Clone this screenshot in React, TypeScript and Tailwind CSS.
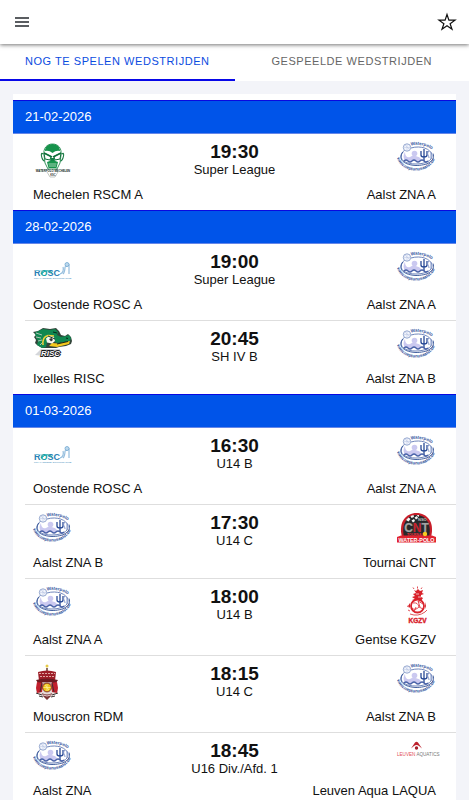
import { useState } from "react";

type Club = "mechelen" | "aalst" | "oostende" | "ixelles" | "tournai" | "gent" | "mouscron" | "leuven";

type Team = { name: string; club: Club };

type Match = {
  time: string;
  league: string;
  home: Team;
  away: Team;
  logoHeight: string;
};

const DAYS: { date: string; matches: Match[] }[] = [
  {
    date: "21-02-2026",
    matches: [
      {
        time: "19:30",
        league: "Super League",
        home: { name: "Mechelen RSCM A", club: "mechelen" },
        away: { name: "Aalst ZNA A", club: "aalst" },
        logoHeight: "h-[39px]",
      },
    ],
  },
  {
    date: "28-02-2026",
    matches: [
      {
        time: "19:00",
        league: "Super League",
        home: { name: "Oostende ROSC A", club: "oostende" },
        away: { name: "Aalst ZNA A", club: "aalst" },
        logoHeight: "h-[39px]",
      },
      {
        time: "20:45",
        league: "SH IV B",
        home: { name: "Ixelles RISC", club: "ixelles" },
        away: { name: "Aalst ZNA B", club: "aalst" },
        logoHeight: "h-9",
      },
    ],
  },
  {
    date: "01-03-2026",
    matches: [
      {
        time: "16:30",
        league: "U14 B",
        home: { name: "Oostende ROSC A", club: "oostende" },
        away: { name: "Aalst ZNA A", club: "aalst" },
        logoHeight: "h-[39px]",
      },
      {
        time: "17:30",
        league: "U14 C",
        home: { name: "Aalst ZNA B", club: "aalst" },
        away: { name: "Tournai CNT", club: "tournai" },
        logoHeight: "h-9",
      },
      {
        time: "18:00",
        league: "U14 B",
        home: { name: "Aalst ZNA A", club: "aalst" },
        away: { name: "Gentse KGZV", club: "gent" },
        logoHeight: "h-[39px]",
      },
      {
        time: "18:15",
        league: "U14 C",
        home: { name: "Mouscron RDM", club: "mouscron" },
        away: { name: "Aalst ZNA B", club: "aalst" },
        logoHeight: "h-[39px]",
      },
      {
        time: "18:45",
        league: "U16 Div./Afd. 1",
        home: { name: "Aalst ZNA", club: "aalst" },
        away: { name: "Leuven Aqua LAQUA", club: "leuven" },
        logoHeight: "h-9",
      },
    ],
  },
];

function AalstLogo({ id }: { id: string }) {
  return (
    <svg className="overflow-visible" width="39" height="32" viewBox="0 0 39 32" fill="none" aria-hidden="true">
      <path id={`${id}-top`} d="M14 5.500Q25 3 36 10" />
      <path id={`${id}-bottom`} d="M0 18C5 35 34 35 39 16" />
      <path d="M14 8C24 5 34 9 35 15c1 6-8 9-16 9C10 24 4 21 4 16c0-2 1-4 4-6" stroke="#7187bc" strokeWidth="1" />
      <path d="M6 12C0 20 8 25 19 25.500c10 0 20-4 17-12" stroke="#2f4f94" strokeWidth="0.900" />
      <circle cx="10" cy="7.500" r="3.700" fill="#f1f4fc" stroke="#8b9fca" strokeWidth="0.900" />
      <path d="M7 7.500h6M10 4v7M8 5l4 4" stroke="#b7c3e0" strokeWidth="0.500" />
      <path d="M8 12c0 4 2 6 5 5 2-1 3-2 5-1 4 1 6 1 6 5H9c-3-2-3-6-1-9z" fill="#cbc9f0" />
      <circle cx="17.500" cy="13.500" r="2.800" fill="#cbc9f0" />
      <path d="M24 11v4q0 2 3 2t3-2v-4M27 9v12" stroke="#294a96" strokeWidth="1.300" />
      <path d="M32 11c-3 3 0 4 0 7m2-6v7" stroke="#8397ca" strokeWidth="1" />
      <path d="M7 21q2-2 4 0t4 0 4 0 4 0 4 0 4 0" stroke="#4a63a8" strokeWidth="1.400" />
      <text fill="#34559b" fontSize="4.500" fontWeight="700">
        <textPath href={`#${id}-top`}>Waterpolo</textPath>
      </text>
      <text fill="#2b4d97" fontSize="4.400" fontWeight="700">
        <textPath href={`#${id}-bottom`}>www.neptunusaalst.be</textPath>
      </text>
    </svg>
  );
}

function MechelenLogo() {
  return (
    <svg width="39" height="39" viewBox="0 0 39 39" fill="none" aria-hidden="true">
      <path d="M10 14c-2-2-2 1-1 4s2 3 3 3M29 14c2-2 2 1 1 4s-2 3-3 3" stroke="#1c7b45" strokeWidth="1.100" />
      <path d="M11 15C10 8 14 4 19.500 4S29 8 28 15l-1 8-3 6h-9l-3-6z" fill="#fff" stroke="#25894f" strokeWidth="0.900" />
      <path d="M12 11c0-4 3-7 7.500-7S27 7 27 11q-4-1-7.500 2-3.500-3-7.500-2z" fill="#16934b" />
      <path d="M11 13l7 3.500-1 3.500-5-1zM28 13l-7 3.500 1 3.500 5-1z" fill="#fff" stroke="#0d6f37" strokeWidth="1" />
      <path d="M11 13l8 4M28 13l-8 4" stroke="#0d6f37" strokeWidth="1.400" />
      <path d="M18 18h3l1 3-2.500 1-2.500-1z" fill="#118044" />
      <path d="M14 22q5.500-3 11 0l-1.500 6h-8z" fill="#16934b" />
      <path d="M15.500 24h8M16 26h7" stroke="#dff0e5" strokeWidth="0.700" />
      <path d="M14 32l3 5h5l3-5" stroke="#9aa39d" strokeWidth="0.600" />
      <text x="20" y="31.500" textAnchor="middle" fontSize="2.800" fontWeight="700" fill="#152b1e">
        WATERPOLO MECHELEN
      </text>
      <text x="20" y="36" textAnchor="middle" fontSize="2.600" fontWeight="700" fill="#333">
        KSC
      </text>
    </svg>
  );
}

function OostendeLogo() {
  return (
    <svg width="39" height="39" viewBox="0 0 39 39" fill="none" aria-hidden="true">
      <path d="M27 24c3-1 4-4 3-7m0 7c2-2 2-4 2-7l4-2v9" stroke="#94bddd" strokeWidth="1.200" />
      <circle cx="34" cy="14.500" r="2" fill="#bed9ed" stroke="#70a7d0" strokeWidth="0.800" />
      <text x="1" y="25.500" fontSize="9" fontWeight="700" fill="#2a7fb4">
        R<tspan fill="#17a3a6">O</tspan>SC
      </text>
      <path d="M8 24q6-6 11-1" stroke="#1aa7a4" strokeWidth="1.200" />
      <path d="M2 20.500h7" stroke="#9fdae6" strokeWidth="0.700" />
      <text x="1" y="29" fontSize="2.300" fill="#3d8dbb">
        ROYAL OSTEND SWIMMING CLUB
      </text>
    </svg>
  );
}

function IxellesLogo() {
  return (
    <svg width="39" height="32" viewBox="0 0 39 32" fill="none" aria-hidden="true">
      <path d="M0 5l5-1 5-3 7 1 6-1 3 3 2 4 4 1 3-2 3 3 1 4-1 3-5 2-7 1-3 1H9l-5-3-2-2 1-3-2-3 2-2z" fill="#33443a" />
      <path d="M2 5.500l8-3.500 7 1 5-1 3 3-1 3 4 2 5-1 3-1 2 3-1 3-13 2-5-3-5 2-1 5-4 1-5-3 1-4-2-3z" fill="#118750" />
      <path d="M3 6l6 2M3 10l5 1M5 14l4-1M7 18l3-3" stroke="#bcc9be" strokeWidth="0.900" />
      <path d="M10 18q-1-8 5-9.500l6 .5" stroke="#f1cf38" strokeWidth="1.600" />
      <path d="M19 16l6 .5 12-2.500-1 3-12 3-8-1z" fill="#f4c81d" />
      <path d="M13 11.500l3-2.500 5 1 1 4-3 2.500-5-1z" fill="#f8f8ef" />
      <path d="M16 12l2.500-1 1.500 2-2 1.500z" fill="#333" />
      <path d="M15 9l7 3M33 11l2 .5M20 5l4 1M24 17l11-2.500" stroke="#071e16" strokeWidth="0.900" />
      <path d="M2 28l6-6h19l-1 7H10z" fill="#d4d6da" />
      <text x="8" y="28.500" fontSize="8" fontStyle="italic" fontWeight="700" fill="#fff" stroke="#17191b" strokeWidth="1.800" paintOrder="stroke">
        RISC
      </text>
    </svg>
  );
}

function TournaiLogo() {
  return (
    <svg width="39" height="32" viewBox="0 0 39 32" fill="none" aria-hidden="true">
      <path d="M5 26C1 11 9 2 19.500 2S38 11 34 26z" fill="#c81e2a" />
      <path d="M7 26C4 13 10 4 19.500 4S35 13 32 26z" fill="#27282a" />
      <path d="M9 9l2.500-2.500 2 1.500-2 2.500zm4.500-4l3-1 .5 2-2.500 1zm1 4.500l2.500-1.500 1 2-2 1.500zm3-3l2.500-1.500 1 2-2 1.500zm2-2.500h2.500v2z" fill="#f3f3f3" />
      <text x="21" y="9.500" fontSize="4" fontWeight="700" fill="#c5c5c5">
        NSO
      </text>
      <text x="19.500" y="21" textAnchor="middle" fontSize="12" fontWeight="700" fill="#a3a3a3" stroke="#4a4a4a" strokeWidth="0.700" paintOrder="stroke">
        C<tspan fill="#c8202b">N</tspan>T
      </text>
      <text x="10" y="25" fontSize="3.400" fontWeight="700" fill="#ee323b">
        TOURNAI
      </text>
      <path d="M0 26l4-1.500h31l4 1.500v5.500H0z" fill="#e12330" />
      <circle cx="28" cy="23" r="2.200" fill="#f8cb21" />
      <text x="19.500" y="30.500" textAnchor="middle" fontSize="5.400" fontWeight="700" fill="#fff">
        WATER-POLO
      </text>
    </svg>
  );
}

function GentLogo() {
  return (
    <svg className="overflow-visible" width="39" height="40" viewBox="0 0 39 40" fill="none" aria-hidden="true">
      <g fill="#d9222b">
        <path d="M17 5l2 1 2-2 2 2 3-1-1 3 2 1-3 1v2l2 1-2 3h-4l-5-1 3-1-3-2 3-1-2-2 3-1z" />
        <path d="M13 18l-2 3 2 2M28 17l1 4-1 3" />
      </g>
      <path d="M19 9h3m-1 3h3" stroke="#fff" strokeWidth="0.700" />
      <circle cx="20.500" cy="21" r="6.500" fill="#fff" stroke="#d9222b" strokeWidth="1.800" />
      <path d="M16 18q5-1 6 4-4 4-7 1m7-1l4 2m-5-8l5 3m-9 8l2-5m2-6l2 6" stroke="#d9222b" strokeWidth="0.800" />
      <path d="M13 29q8 3 15-2M10 21l2 1m-1 3l2 1m15 1l2-2" stroke="#e0555b" strokeWidth="1" />
      <path d="M20.500 3.500v-2M17 4l-1-1.500m8 1.500l1-1.500" stroke="#d9222b" strokeWidth="0.800" />
      <text x="20.500" y="38" textAnchor="middle" fontSize="6.500" fontWeight="700" fill="#d9222b" stroke="#d9222b" strokeWidth="0.400">
        KGZV
      </text>
    </svg>
  );
}

function MouscronLogo() {
  return (
    <svg width="39" height="39" viewBox="0 0 39 39" fill="none" aria-hidden="true">
      <circle cx="14" cy="4" r="1.500" fill="#e7cc48" />
      <path d="M13 6h2v3h-2z" fill="#8d6d66" />
      <path d="M5 10q9-3 18 0l-1 9H6z" fill="#9d1f29" />
      <path d="M6 11.500h16M7 14.500h14" stroke="#e8b5b0" strokeWidth="0.900" strokeDasharray="2 1" />
      <path d="M3 18q11-3 22 0l-2 3H5z" fill="#6d1a20" />
      <path d="M4 21h20l1 8-4 4-3 1-4 4-4-4-3-1-4-4z" fill="#e7dcda" />
      <path d="M4 20l6 1-1 9-5 1-1-5zM24 20l-6 1 1 9 5 1 1-5z" fill="#c11f2c" />
      <path d="M3 31l6 2m16-2l-6 2M6 34l4 1m12-1l-4 1M9 21l-2 9m12-9l2 9" stroke="#3b3030" strokeWidth="1" />
      <path d="M9 20h10l-1 3h-8z" fill="#b99a97" />
      <circle cx="14" cy="25.500" r="4.400" fill="#f0c419" stroke="#7b241f" strokeWidth="0.900" />
      <path d="M10.500 25.500h7m-3.500-3.500v7m-2-6l4 5" stroke="#fff2a0" strokeWidth="0.700" />
      <path d="M9 31q5 3 10 0l-1 3-4 4-4-4z" fill="#7c3637" />
      <path d="M10 33q4 2 8 0" stroke="#f2dddd" strokeWidth="0.900" />
    </svg>
  );
}

function LeuvenLogo() {
  return (
    <svg className="overflow-visible" width="39" height="20" viewBox="0 0 39 20" fill="none" aria-hidden="true">
      <path d="M14 9.500l4-6q1.500-1.500 3 0l4 6-3-2.500q-2.500-2-5 0z" fill="#bd202c" />
      <circle cx="19.500" cy="9" r="1.700" fill="#a61e2a" />
      <text x="0" y="17" fontSize="4.600" fill="#df5058">
        LEUVEN <tspan fill="#777">AQUATICS</tspan>
      </text>
    </svg>
  );
}

function ClubLogo({ club, id }: { club: Club; id: string }) {
  switch (club) {
    case "mechelen":
      return <MechelenLogo />;
    case "oostende":
      return <OostendeLogo />;
    case "ixelles":
      return <IxellesLogo />;
    case "tournai":
      return <TournaiLogo />;
    case "gent":
      return <GentLogo />;
    case "mouscron":
      return <MouscronLogo />;
    case "leuven":
      return <LeuvenLogo />;
    default:
      return <AalstLogo id={id} />;
  }
}

function MatchRow({ match, id }: { match: Match; id: string }) {
  return (
    <li className="ml-3 border-b border-[#dedede] pt-[6px] pr-5 pb-[7px] pl-2 last:border-b-0">
      <div className="grid grid-cols-3">
        <div className={match.logoHeight}>
          <ClubLogo club={match.home.club} id={`${id}-home`} />
        </div>
        <div className="text-center">
          <p className="text-[19px] leading-6 font-bold">{match.time}</p>
          <p className="text-[13px] leading-3 whitespace-nowrap">{match.league}</p>
        </div>
        <div className={`flex justify-end ${match.logoHeight}`}>
          <ClubLogo club={match.away.club} id={`${id}-away`} />
        </div>
      </div>
      <div className="mt-2 flex justify-between text-[13px] leading-4">
        <span>{match.home.name}</span>
        <span>{match.away.name}</span>
      </div>
    </li>
  );
}

export default function App() {
  const [tab, setTab] = useState("upcoming");
  const [favorite, setFavorite] = useState(false);

  const tabClass = (active: boolean) =>
    `flex-1 border-b-2 text-[11px] tracking-wider uppercase ${
      active ? "border-[#0808e8] text-[#0b4cdf]" : "border-transparent text-[#666]"
    }`;

  return (
    <div className="h-screen overflow-hidden bg-[#f3f4f9] font-['Liberation_Sans',Arial,sans-serif] text-[#111]">
      {/* Toolbar */}
      <header className="relative flex h-11 items-center justify-between bg-white px-3 shadow-[0_1px_4px_rgba(0,0,0,0.55)]">
        <button aria-label="Menu" className="p-[3px]">
          <svg width="14" height="14" viewBox="0 0 14 14" fill="none" stroke="#25292e" strokeWidth="1.300">
            <path d="M0 3h14M0 7h14M0 11h14" />
          </svg>
        </button>
        <button aria-label="Favoriet" aria-pressed={favorite} onClick={() => setFavorite(!favorite)}>
          <svg width="20" height="20" viewBox="0 0 20 20" fill={favorite ? "currentColor" : "none"} stroke="#111" strokeWidth="1.200">
            <path d="M10 2.500l1.900 5.700H18l-4.900 3.500 1.900 5.600-5-3.500-5 3.500 1.900-5.600L2 8.200h6.100z" />
          </svg>
        </button>
      </header>

      <nav className="flex h-[37px] bg-white" role="tablist">
        <button role="tab" aria-selected={tab === "upcoming"} className={tabClass(tab === "upcoming")} onClick={() => setTab("upcoming")}>
          Nog te spelen wedstrijden
        </button>
        <button role="tab" aria-selected={tab === "played"} className={tabClass(tab === "played")} onClick={() => setTab("played")}>
          Gespeelde wedstrijden
        </button>
      </nav>

      {/* Match days */}
      <main className="mx-[13px] mt-[13px] bg-white pt-[6px]">
        {DAYS.map((day) => (
          <section key={day.date}>
            <h2 className="border-y border-t-[#0808e0] border-b-[#6687e8] bg-[#0054e9] px-3 py-2 text-[13px] leading-4 text-white">
              {day.date}
            </h2>
            <ul>
              {day.matches.map((match) => (
                <MatchRow key={match.time} match={match} id={`${day.date}-${match.time.replace(":", "")}`} />
              ))}
            </ul>
          </section>
        ))}
      </main>
    </div>
  );
}
